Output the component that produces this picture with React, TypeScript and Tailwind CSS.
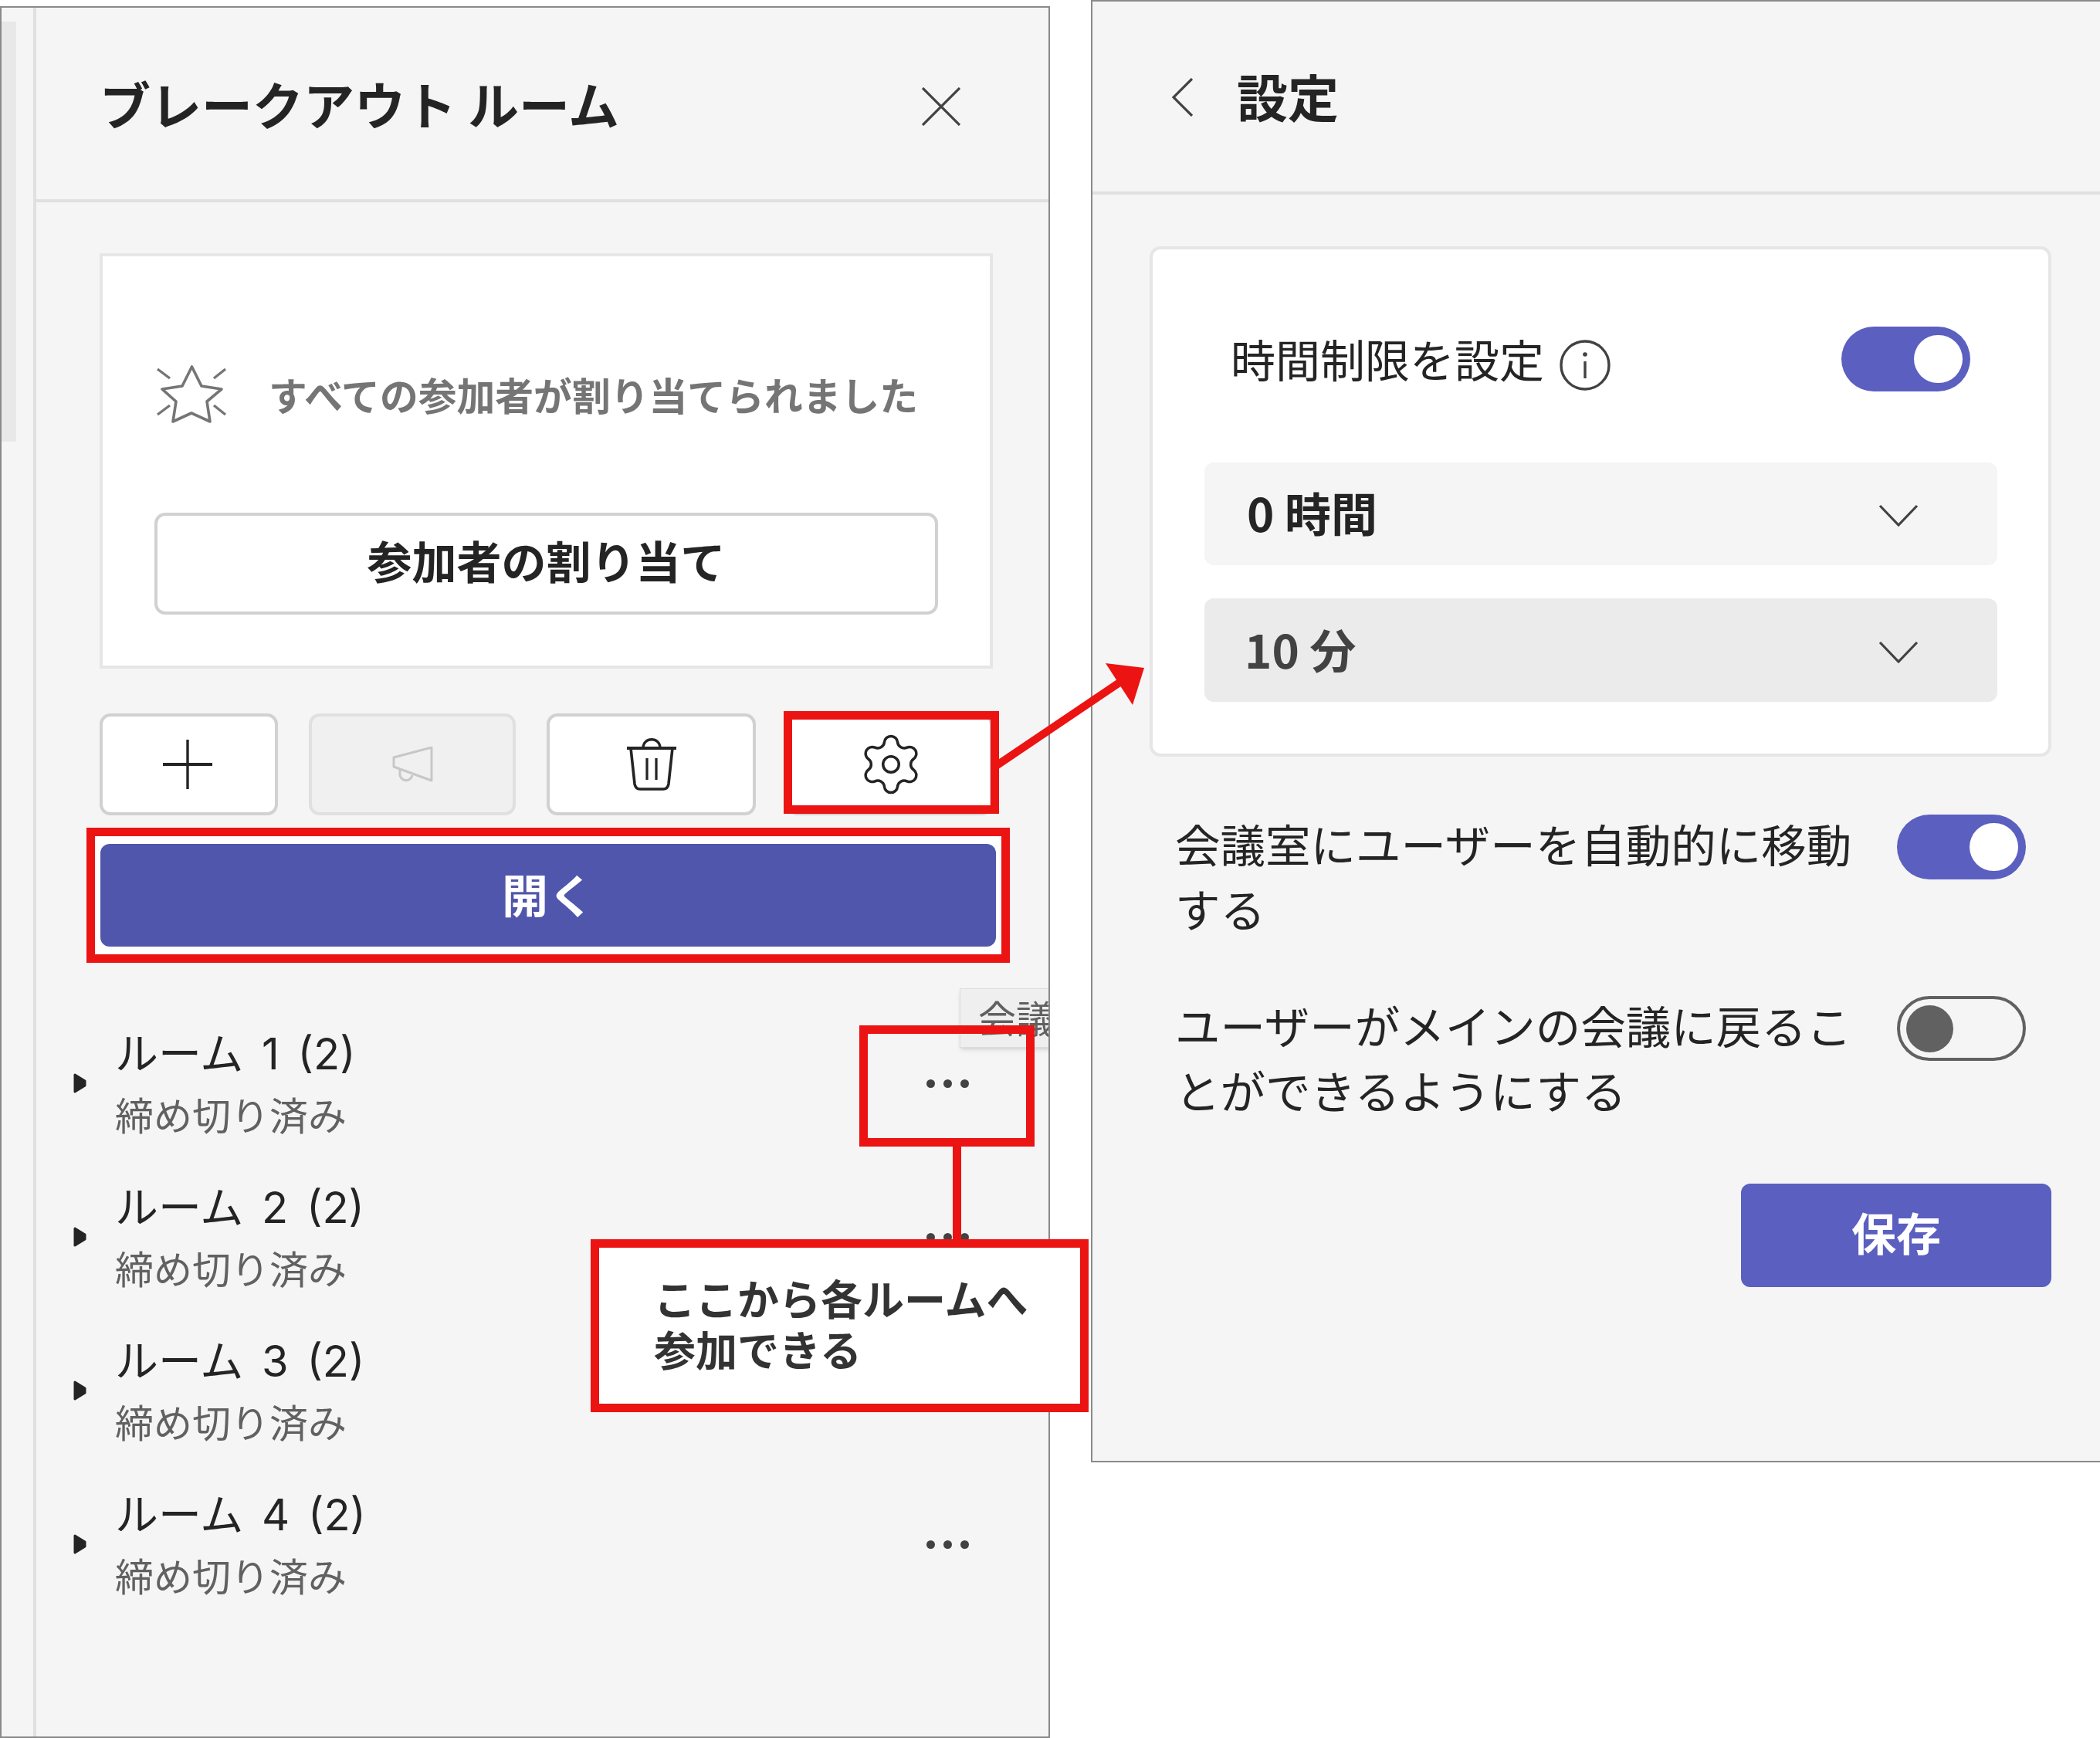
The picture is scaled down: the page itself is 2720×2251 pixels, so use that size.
import React from "react";

function Toggle({ on }: { on: boolean }) {
  return on ? (
    <div className="w-[167px] h-[84px] rounded-full bg-[#5b5fc0] flex items-center justify-end pr-[10px] shrink-0">
      <div className="w-[63px] h-[62px] rounded-full bg-white" />
    </div>
  ) : (
    <div className="w-[167px] h-[84px] rounded-full border-[4px] border-[#616161] flex items-center pl-[8px] shrink-0">
      <div className="w-[61px] h-[61px] rounded-full bg-[#616161]" />
    </div>
  );
}

function Chevron({ className }: { className: string }) {
  return (
    <svg width="52" height="29" viewBox="0 0 52 29" fill="none" className={className}>
      <path d="M2 2 L26 27 L50 2" stroke="#424242" strokeWidth="3.2" />
    </svg>
  );
}

function Room({ n }: { n: number }) {
  return (
    <div className="h-[199px] flex items-center pl-[48px] pr-[103px]">
      <svg width="17" height="26" viewBox="0 0 17 26" className="mb-[5px] shrink-0">
        <path d="M2 2 L15 10 V16 L2 24 Z" fill="#242424" stroke="#242424" strokeWidth="3" strokeLinejoin="round" />
      </svg>
      <div className="ml-[37px] mr-auto mb-[2px]">
        <div className="text-[56px] leading-[76px] text-[#242424] font-normal font-['Inter','Noto_Sans_CJK_JP',sans-serif] [word-spacing:8px]">{`ルーム ${n} (2)`}</div>
        <div className="text-[50px] leading-[79px] text-[#616161] font-normal">締め切り済み</div>
      </div>
      <div className="flex gap-[11px] mb-[5px] mr-[0px]">
        <div className="w-[11px] h-[11px] rounded-full bg-[#424242]" />
        <div className="w-[11px] h-[11px] rounded-full bg-[#424242]" />
        <div className="w-[11px] h-[11px] rounded-full bg-[#424242]" />
      </div>
    </div>
  );
}

export default function App() {
  return (
    <div className="relative w-[2720px] h-[2251px] bg-white overflow-hidden flex items-start font-['Noto_Sans_CJK_JP','Noto_Sans',sans-serif]">
      {/* Left panel */}
      <div className="relative mt-[8px] w-[1360px] h-[2243px] bg-[#f5f5f5] border-2 border-[#8a8a8a] flex overflow-hidden shrink-0">
        <div className="w-[19px] mt-[18px] h-[544px] bg-[#e8e8e8] shrink-0" />
        <div className="ml-[22px] w-[4px] bg-[#e0e0e0] shrink-0" />
        <div className="flex-1 min-w-0">
          <div className="h-[252px] border-b-[4px] border-[#e0e0e0] flex items-center justify-between pl-[82px] pr-[114px]">
            <div className="text-[66px] font-bold text-[#242424] leading-none -mt-[2px]">ブレークアウト ルーム</div>
            <svg width="50" height="50" viewBox="0 0 50 50" fill="none" className="mt-[8px]">
              <path d="M1 1 L49 49 M49 1 L1 49" stroke="#424242" strokeWidth="3.2" />
            </svg>
          </div>

          <div className="pl-[82px]">
            <div className="mt-[66px] w-[1157px] h-[538px] bg-white border-[4px] border-[#e6e6e6] flex flex-col pl-[67px] pr-[67px] pt-[141px]">
              <div className="flex items-center h-[76px]">
                <svg width="96" height="76" viewBox="30 25 96 76" fill="none" className="shrink-0">
                  <path
                    d="M78.5 27 L91 52 L117 56 L98 72 L102 98 L78 87 L54 98 L58 72 L40 56 L66 52 Z"
                    stroke="#757575"
                    strokeWidth="3.6"
                    strokeLinejoin="round"
                  />
                  <path d="M34 30 L50 42 M122 30 L107 42 M34 89 L50 77 M122 89 L107 77" stroke="#757575" strokeWidth="3.4" />
                </svg>
                <div className="ml-[52px] text-[49.8px] font-bold text-[#757575] whitespace-nowrap leading-none">
                  すべての参加者が割り当てられました
                </div>
              </div>
              <div className="mt-[115px] h-[132px] w-[1015px] rounded-[14px] border-[4px] border-[#d1d1d1] bg-white flex items-center justify-center text-[58px] font-bold text-[#242424] leading-none">
                <span className="-mt-[10px]">参加者の割り当て</span>
              </div>
            </div>

            <div className="mt-[58px] flex gap-[40px]">
              <div className="w-[231px] h-[132px] rounded-[14px] border-[4px] border-[#d1d1d1] bg-white flex items-center justify-center">
                <svg width="64" height="64" viewBox="0 0 64 64" fill="none" className="-ml-[3px]">
                  <path d="M32 0 V64" stroke="#242424" strokeWidth="3.4" />
                  <path d="M0 32 H64" stroke="#242424" strokeWidth="4" />
                </svg>
              </div>
              <div className="w-[268px] h-[132px] rounded-[14px] border-[4px] border-[#e0e0e0] bg-[#f0f0f0] flex items-center justify-center">
                <svg width="54" height="46" viewBox="0 0 54 46" fill="none">
                  <path d="M52 1 V44 L3 26 V14 Z" stroke="#c7c7c7" strokeWidth="3" strokeLinejoin="round" />
                  <path d="M11 29 V34 A8 8 0 0 0 27 37" stroke="#c7c7c7" strokeWidth="3" />
                </svg>
              </div>
              <div className="w-[271px] h-[132px] rounded-[14px] border-[4px] border-[#d1d1d1] bg-white flex items-center justify-center">
                <svg width="66" height="68" viewBox="0 0 66 68" fill="none">
                  <path d="M1 13 H65" stroke="#242424" strokeWidth="4" />
                  <path d="M22 13 C22 -2 44 -2 44 13" stroke="#242424" strokeWidth="3.4" />
                  <path d="M6 13 L11 59 Q12 66 18 66 H48 Q54 66 55 59 L60 13" stroke="#242424" strokeWidth="3.6" />
                  <path d="M27 26 V54 M39 26 V54" stroke="#242424" strokeWidth="3.2" />
                </svg>
              </div>
              <div className="w-[267px] h-[132px] rounded-[14px] border-[4px] border-[#d1d1d1] bg-white flex items-center justify-center">
                <svg width="88" height="88" viewBox="0 0 24 24" fill="none" className="ml-[3px]">
                  <path
                    d="M9.671 4.136a2.34 2.34 0 0 1 4.659 0 2.34 2.34 0 0 0 3.319 1.915 2.34 2.34 0 0 1 2.33 4.033 2.34 2.34 0 0 0 0 3.831 2.34 2.34 0 0 1-2.33 4.033 2.34 2.34 0 0 0-3.319 1.915 2.34 2.34 0 0 1-4.659 0 2.34 2.34 0 0 0-3.32-1.915 2.34 2.34 0 0 1-2.33-4.033 2.34 2.34 0 0 0 0-3.831A2.34 2.34 0 0 1 6.35 6.051a2.34 2.34 0 0 0 3.319-1.915"
                    stroke="#242424"
                    strokeWidth="0.95"
                  />
                  <circle cx="12" cy="12" r="2.8" stroke="#242424" strokeWidth="0.95" />
                </svg>
              </div>
            </div>

            <div className="mt-[16px] -ml-[17px] w-[1196px] h-[175px] border-[11px] border-[#ec1313] bg-white px-[7px] py-[10px]">
              <div className="h-full rounded-[12px] bg-[#5056ab] flex items-center justify-center text-white text-[60px] font-bold leading-none">
                <span className="-mt-[6px]">開く</span>
              </div>
            </div>
          </div>

          <div className="mt-[59px]">
            {[1, 2, 3, 4].map((n) => (
              <Room key={n} n={n} />
            ))}
          </div>
        </div>

        {/* Tooltip */}
        <div className="absolute left-[1241px] top-[1270px] w-[200px] h-[77px] bg-[#efefef] border border-[#dcdcdc] shadow-md pl-[23px] text-[49px] leading-[72px] text-[#616161] whitespace-nowrap font-normal">
          会議室
        </div>
      </div>

      {/* Right panel */}
      <div className="ml-[53px] w-[1307px] h-[1894px] bg-[#f5f5f5] border-2 border-[#8a8a8a] border-r-0 shrink-0">
        <div className="h-[250px] border-b-[4px] border-[#e0e0e0] flex items-center pl-[103px]">
          <svg width="28" height="50" viewBox="0 0 28 50" fill="none" className="shrink-0 mt-[2px]">
            <path d="M26 1 L2 25 L26 49" stroke="#424242" strokeWidth="3.2" />
          </svg>
          <div className="ml-[56px] text-[66px] font-bold text-[#242424] leading-none -mt-[4px]">設定</div>
        </div>

        <div className="mt-[67px] ml-[74px] w-[1168px] h-[661px] bg-white border-[4px] border-[#e6e6e6] rounded-[14px] pt-[100px] pl-[67px] pr-[66px]">
          <div className="flex items-center justify-between h-[84px] pl-[34px] pr-[35px]">
            <div className="flex items-center">
              <span className="text-[58px] leading-none text-[#242424] font-normal -mt-[2px]">時間制限を設定</span>
              <svg width="66" height="66" viewBox="0 0 66 66" fill="none" className="ml-[20px] mt-[16px]">
                <circle cx="33" cy="33" r="31" stroke="#424242" strokeWidth="3.4" />
                <path d="M33 28 V50" stroke="#424242" strokeWidth="3.4" />
                <circle cx="33" cy="19" r="2.8" fill="#424242" />
              </svg>
            </div>
            <Toggle on />
          </div>
          <div className="mt-[92px] h-[133px] rounded-[12px] bg-[#f5f5f5] flex items-center justify-between pl-[55px] pr-[102px]">
            <span className="text-[60px] font-bold text-[#242424] leading-none -mt-[5px]">0 時間</span>
            <Chevron className="mt-[4px]" />
          </div>
          <div className="mt-[43px] h-[134px] rounded-[12px] bg-[#ebebeb] flex items-center justify-between pl-[52px] pr-[102px]">
            <span className="text-[60px] font-bold text-[#424242] leading-none -mt-[5px]">10 分</span>
            <Chevron className="mt-[4px]" />
          </div>
        </div>

        <div className="ml-[107px] w-[1102px] mt-[75px] flex items-start justify-between">
          <div className="w-[885px] text-[58.5px] leading-[84px] text-[#242424] font-normal -mt-[5px]">
            会議室にユーザーを自動的に移動する
          </div>
          <Toggle on />
        </div>
        <div className="ml-[107px] w-[1102px] mt-[72px] flex items-start justify-between">
          <div className="w-[885px] text-[58.5px] leading-[84px] text-[#242424] font-normal -mt-[5px]">
            ユーザーがメインの会議に戻ることができるようにする
          </div>
          <Toggle on={false} />
        </div>
        <div className="ml-[840px] mt-[80px] w-[402px] h-[134px] rounded-[12px] bg-[#5b5fc0] flex items-center justify-center text-white text-[58px] font-bold leading-none">
          <span className="-mt-[10px]">保存</span>
        </div>
      </div>

      {/* Annotations */}
      <div className="absolute left-[1015px] top-[921px] w-[279px] h-[133px] border-[11px] border-[#ec1313]" />
      <svg className="absolute left-0 top-0" width="2720" height="2251" fill="none">
        <path d="M1290 992 L1450 884" stroke="#ec1313" strokeWidth="10" />
        <path d="M1482 865 L1432 859 L1467 913 Z" fill="#ec1313" />
      </svg>
      <div className="absolute left-[1113px] top-[1328px] w-[227px] h-[157px] border-[11px] border-[#ec1313]" />
      <div className="absolute left-[1234px] top-[1485px] w-[11px] h-[122px] bg-[#ec1313]" />
      <div className="absolute left-[765px] top-[1605px] w-[645px] h-[224px] border-[11px] border-[#ec1313] bg-white pl-[71px] pt-[32px] text-[54px] leading-[66px] font-bold text-[#333333]">
        <div className="whitespace-nowrap">ここから各ルームへ</div>
        <div className="whitespace-nowrap">参加できる</div>
      </div>
    </div>
  );
}
